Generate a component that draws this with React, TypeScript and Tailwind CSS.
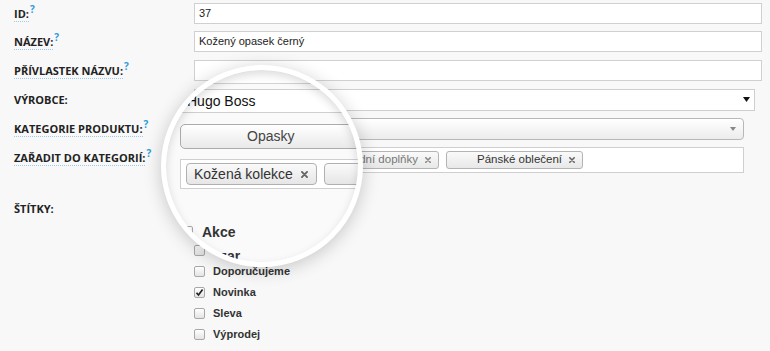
import React from "react";

const labelFont = "font-['Open_Sans','Liberation_Sans',Arial,sans-serif]";

function Label({ text, help = true }: { text: string; help?: boolean }) {
  return (
    <div className={`w-[180px] shrink-0 text-[11px] font-bold leading-[14px] text-[#222] ${labelFont}`}>
      <span className={help ? "border-b border-dotted border-[#9ccced]" : ""}>{text}</span>
      {help && (
        <span className="relative -top-[5px] ml-[1px] text-[10px] font-bold text-[#2f9bd8]">?</span>
      )}
    </div>
  );
}

function Cross({ size = 6, color = "#555" }: { size?: number; color?: string }) {
  return (
    <svg width={size} height={size} viewBox="0 0 6 6" className="shrink-0">
      <path d="M0.8 0.8 L5.2 5.2 M5.2 0.8 L0.8 5.2" stroke={color} strokeWidth="1.6" strokeLinecap="round" />
    </svg>
  );
}

function Tag({ text, pl, muted, hidden }: { text: string; pl: string; muted?: boolean; hidden?: boolean }) {
  return (
    <div
      className={`flex h-[18px] shrink-0 items-center gap-[7px] rounded-[3px] border border-[#b4b4b4] bg-gradient-to-b from-[#fafafa] to-[#e8e8e8] pr-[7px] text-[11.5px] ${pl} ${
        muted ? "text-[#777]" : "text-[#333]"
      }`}
    >
      <span className={hidden ? "invisible" : ""}>{text}</span>
      <Cross color={muted ? "#888" : "#666"} />
    </div>
  );
}

function Check({ checked, size = "w-[11px] h-[11px]" }: { checked?: boolean; size?: string }) {
  return (
    <div
      className={`${size} flex shrink-0 items-center justify-center rounded-[2px] border border-[#a8a8a8] bg-gradient-to-b from-[#ffffff] to-[#e4e4e4]`}
    >
      {checked && (
        <svg width="9" height="9" viewBox="0 0 9 9">
          <path d="M1.5 4.8 L3.5 7 L7.6 1.6" fill="none" stroke="#222" strokeWidth="1.7" />
        </svg>
      )}
    </div>
  );
}

const tags = ["Akce", "Bazar", "Doporučujeme", "Novinka", "Sleva", "Výprodej"];

function Magnifier() {
  return (
    <div className="absolute left-[161px] top-[65px] h-[202px] w-[202px] overflow-hidden rounded-full border-[5px] border-white bg-[#fafafa] shadow-[0_3px_18px_rgba(0,0,0,0.2)]">
      <div className="flex w-[420px] flex-col text-[14px] text-[#333]">
        <div className="ml-[14px] h-[14px] border-b border-[#d2d2d2] bg-white" />
        <div className="ml-[14px] mt-[5px] flex h-[24px] items-center border border-[#cfcfcf] bg-white pl-[6px] text-[#111]">
          Hugo Boss
        </div>
        <div className="ml-[14px] mt-[11px] flex h-[25px] items-center rounded-[5px] border border-[#ababab] bg-gradient-to-b from-[#ffffff] to-[#e9e9e9] pl-[66px] text-[#444]">
          Opasky
        </div>
        <div className="ml-[14px] mt-[10px] flex h-[30px] items-center gap-[7px] border border-[#cfcfcf] bg-white pl-[5px]">
          <div className="flex h-[22px] shrink-0 items-center gap-[8px] rounded-[4px] border border-[#b0b0b0] bg-gradient-to-b from-[#fafafa] to-[#e6e6e6] pl-[7px] pr-[8px]">
            <span>Kožená kolekce</span>
            <Cross size={7} color="#666" />
          </div>
          <div className="h-[22px] w-[120px] shrink-0 rounded-[4px] border border-[#b0b0b0] bg-gradient-to-b from-[#fafafa] to-[#e6e6e6]" />
        </div>
        <div className="ml-[15px] mt-[31px] flex h-[24px] items-center gap-[9px] font-semibold">
          <Check size="w-[12px] h-[12px]" />
          <span>Akce</span>
        </div>
        <div className="ml-[15px] flex h-[24px] items-center gap-[9px] font-semibold">
          <Check size="w-[12px] h-[12px]" />
          <span>Bazar</span>
        </div>
      </div>
      <div className="pointer-events-none absolute inset-0 rounded-full shadow-[inset_0_4px_10px_rgba(0,0,0,0.14)]" />
    </div>
  );
}

export default function App() {
  return (
    <div className="relative h-[351px] w-[770px] overflow-hidden bg-[#f8f8f8] font-['Liberation_Sans',Arial,sans-serif]">
      <div className="flex flex-col pl-[14px] pr-[8px]">
        <div className="flex h-[27px] items-center">
          <Label text="ID:" />
          <div className="flex h-[21px] flex-1 items-center border border-[#d0d0d0] bg-white pl-[4px] text-[11px] text-[#222]">
            37
          </div>
        </div>
        <div className="flex h-[29px] items-center">
          <Label text="NÁZEV:" />
          <div className="flex h-[21px] flex-1 items-center border border-[#d0d0d0] bg-white pl-[4px] text-[11px] text-[#222]">
            Kožený opasek černý
          </div>
        </div>
        <div className="flex h-[29px] items-center">
          <Label text="PŘÍVLASTEK NÁZVU:" />
          <div className="h-[21px] flex-1 border border-[#d0d0d0] bg-white" />
        </div>
        <div className="flex h-[29px] items-center">
          <Label text="VÝROBCE:" help={false} />
          <div className="mr-[7px] flex h-[22px] flex-1 items-center justify-between border border-[#cfcfcf] bg-white pl-[4px] pr-[4px] text-[11px] text-[#111]">
            <span className="invisible">Hugo Boss</span>
            <svg width="7" height="5" viewBox="0 0 7 5">
              <path d="M0 0 H7 L3.5 5 Z" fill="#111" />
            </svg>
          </div>
        </div>
        <div className="flex h-[29px] items-center">
          <Label text="KATEGORIE PRODUKTU:" />
          <div className="mr-[18px] flex h-[22px] flex-1 items-center justify-between rounded-[4px] border border-[#b8b8b8] bg-gradient-to-b from-[#ffffff] to-[#ececec] pl-[8px] pr-[7px] text-[12px] text-[#444]">
            <span className="invisible">Opasky</span>
            <svg width="6" height="4" viewBox="0 0 6 4">
              <path d="M0 0 H6 L3 4 Z" fill="#888" />
            </svg>
          </div>
        </div>
        <div className="flex items-start">
          <div className="mt-[8px]">
            <Label text="ZAŘADIT DO KATEGORIÍ:" />
          </div>
          <div className="mr-[18px] mt-[4px] flex h-[26px] flex-1 items-center gap-[7px] border border-[#cfcfcf] bg-white pl-[4px]">
            <Tag text="Kožená kolekce" pl="pl-[6px]" hidden />
            <Tag text="Módní doplňky" pl="pl-[27px]" muted />
            <Tag text="Pánské oblečení" pl="pl-[30px]" />
          </div>
        </div>
        <div className="mt-[29px]">
          <Label text="ŠTÍTKY:" help={false} />
        </div>
        <div className="mt-[3px] flex flex-col pl-[180px]">
          {tags.map((t) => (
            <div key={t} className="flex h-[21px] items-center gap-[8px] text-[11px] font-bold text-[#333]">
              <Check checked={t === "Novinka"} />
              <span className={t === "Akce" || t === "Bazar" ? "invisible" : ""}>{t}</span>
            </div>
          ))}
        </div>
      </div>
      <Magnifier />
    </div>
  );
}
